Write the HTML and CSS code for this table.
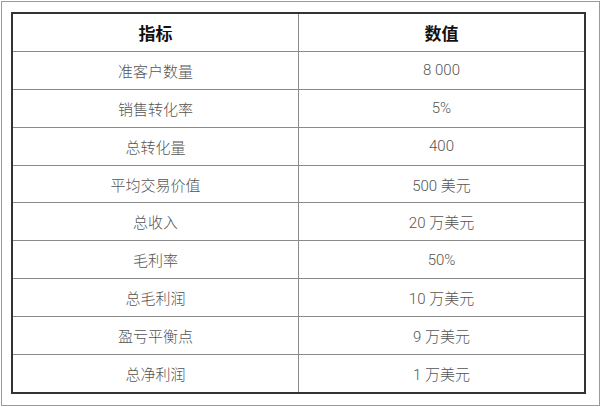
FILE: index.html
```html
<!DOCTYPE html>
<html lang="zh">
<head>
<meta charset="utf-8">
<link rel="stylesheet" href="styles.css">
</head>
<body>
<div class="frame">
  <table class="data">
    <thead>
      <tr><th>指标</th><th>数值</th></tr>
    </thead>
    <tbody>
      <tr><td>准客户数量</td><td>8 000</td></tr>
      <tr><td>销售转化率</td><td>5%</td></tr>
      <tr><td>总转化量</td><td>400</td></tr>
      <tr><td>平均交易价值</td><td>500 美元</td></tr>
      <tr><td>总收入</td><td>20 万美元</td></tr>
      <tr><td>毛利率</td><td>50%</td></tr>
      <tr><td>总毛利润</td><td>10 万美元</td></tr>
      <tr><td>盈亏平衡点</td><td>9 万美元</td></tr>
      <tr><td>总净利润</td><td>1 万美元</td></tr>
    </tbody>
  </table>
</div>
</body>
</html>
```
FILE: styles.css
```css
html, body {
  margin: 0;
  padding: 0;
  background: #fff;
}
.frame {
  margin: 1px;
  width: 599px;
  height: 405px;
  border: 1px solid #9a9a9a;
  padding: 10px 0 0 9px;
  box-sizing: border-box;
}
.data {
  border-collapse: collapse;
  width: 575px;
  border: 2px solid #333;
  font-family: "Roboto", "Noto Sans CJK SC", sans-serif;
  table-layout: fixed;
}
.data th, .data td {
  border: 1px solid #8a8a8a;
  height: 36.9px;
  padding: 0;
  text-align: center;
  vertical-align: middle;
}
.data th {
  font-size: 17px;
  font-weight: 700;
  color: #111;
  font-family: "Noto Sans CJK SC", sans-serif;
}
.data td {
  font-size: 15px;
  font-weight: 300;
  color: #555;
}
```
